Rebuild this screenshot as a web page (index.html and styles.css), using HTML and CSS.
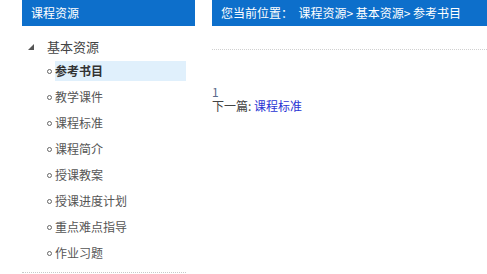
FILE: index.html
```html
<!DOCTYPE html>
<html lang="zh-CN">
    <head>
        <meta charset="UTF-8">
        <meta name="viewport" content="width=device-width, initial-scale=1.0">
        <title>参考书目</title>
        <link rel="stylesheet" href="styles.css">
    </head>
    <body>
        <div class="wrap">
            <div class="side">
                <div class="side-title">课程资源</div>
                <div class="tree">
                    <div class="tree-root">
                        <svg class="arrow" width="6" height="6" viewBox="0 0 6 6"><polygon points="6,0 6,6 0,6" fill="#555"/></svg>
                        <span>基本资源</span>
                    </div>
                    <ul class="tree-list">
                        <li class="on"><i></i><a href="javascript:;">参考书目</a></li>
                        <li><i></i><a href="javascript:;">教学课件</a></li>
                        <li><i></i><a href="javascript:;">课程标准</a></li>
                        <li><i></i><a href="javascript:;">课程简介</a></li>
                        <li><i></i><a href="javascript:;">授课教案</a></li>
                        <li><i></i><a href="javascript:;">授课进度计划</a></li>
                        <li><i></i><a href="javascript:;">重点难点指导</a></li>
                        <li><i></i><a href="javascript:;">作业习题</a></li>
                    </ul>
                </div>
            </div>
            <div class="main">
                <div class="crumb">您当前位置：&nbsp; 课程资源&gt;&nbsp;基本资源&gt;&nbsp;参考书目</div>
                <div class="article"></div>
                <div class="pager">
                    <p class="num">1</p>
                    <p>下一篇: <a href="javascript:;">课程标准</a></p>
                </div>
            </div>
        </div>
    </body>
</html>
```
FILE: styles.css
```css
*{
    margin: 0;
    padding: 0;
}
body{
    font-family: "Microsoft YaHei", "Noto Sans CJK SC", sans-serif;
    font-size: 12px;
    color: #444;
    background: #fff;
}
.wrap{
    display: flex;
    padding-left: 22px;
}
.side{
    width: 173px;
}
.side-title{
    height: 26px;
    line-height: 25px;
    padding-left: 9px;
    background-color: #0d6fcb;
    color: #fff;
    font-size: 12px;
}
.tree{
    width: 164px;
    margin-top: 9px;
    padding-bottom: 6px;
    border-bottom: 1px dotted #c8c8c8;
}
.tree-root{
    height: 23px;
    line-height: 23px;
    display: flex;
    align-items: center;
    font-size: 13px;
    color: #444;
}
.tree-root .arrow{
    margin-left: 6px;
    margin-right: 13px;
}
.tree-list{
    list-style: none;
}
.tree-list li{
    height: 26px;
    display: flex;
    align-items: center;
}
.tree-list li i{
    width: 3px;
    height: 3px;
    border: 1px solid #666;
    border-radius: 50%;
    margin-left: 25px;
    margin-right: 3px;
}
.tree-list li a{
    flex: 1;
    height: 20px;
    line-height: 20px;
    color: #555;
    text-decoration: none;
}
.tree-list li.on a{
    background-color: #e0f0fc;
    font-weight: bold;
    color: #333;
}
.main{
    flex: 1;
    margin-left: 17px;
}
.crumb{
    height: 26px;
    line-height: 25px;
    padding-left: 9px;
    background-color: #0d6fcb;
    color: #fff;
    font-size: 12px;
}
.article{
    height: 23px;
    border-bottom: 1px dotted #d0d0d0;
}
.pager{
    margin-top: 35px;
    line-height: 14px;
    font-size: 12px;
    color: #444;
}
.pager .num{
    color: #5a6a8a;
}
.pager a{
    color: #2a35d4;
    text-decoration: none;
}
```
